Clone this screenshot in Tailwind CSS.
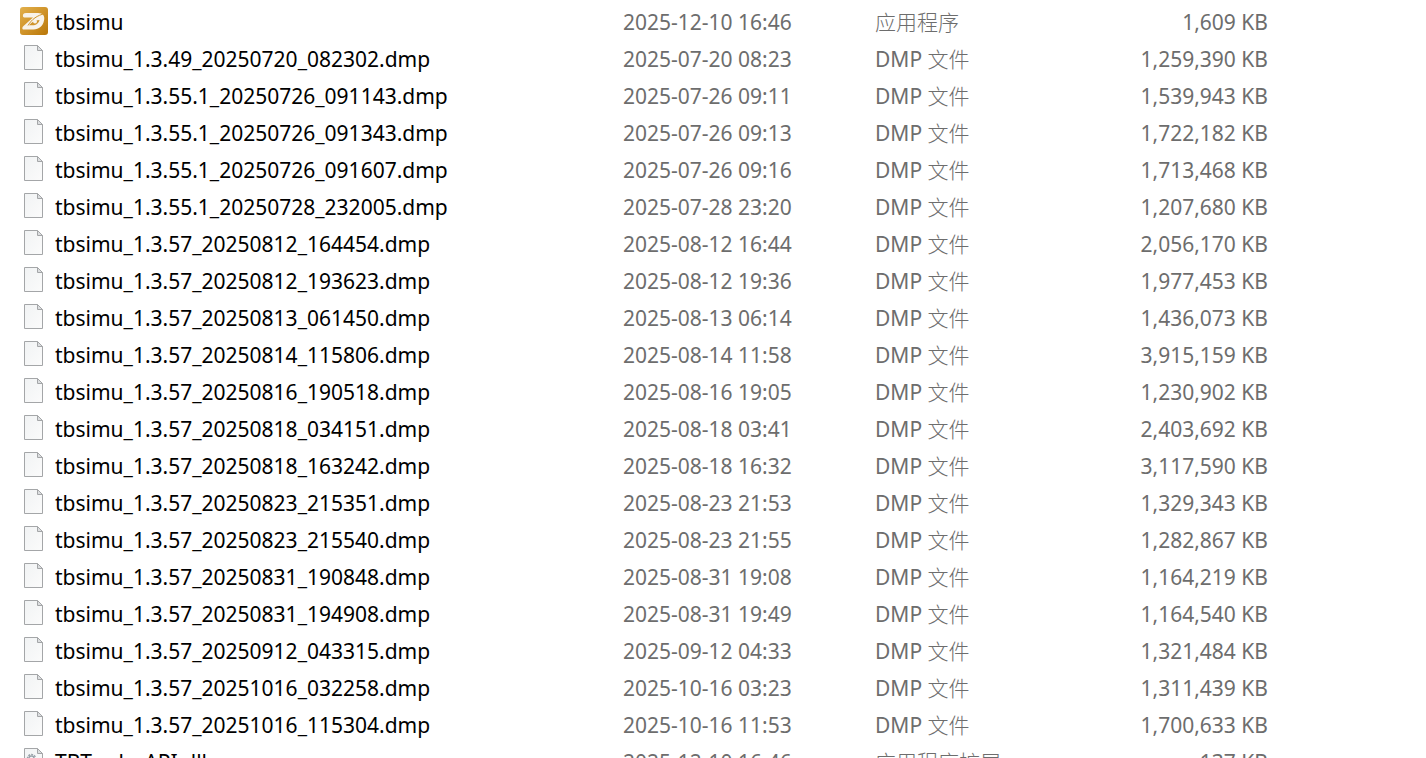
<!DOCTYPE html>
<html lang="zh-CN">
<head>
  <meta charset="UTF-8" />
  <meta name="viewport" content="width=device-width, initial-scale=1.0"/>
  <title>tbsimu</title>
  <script src="https://cdn.jsdelivr.net/npm/@tailwindcss/browser@4"></script>
</head>
<body class="h-screen overflow-hidden bg-white font-['Noto_Sans','Noto_Sans_CJK_SC',sans-serif] text-[21px] leading-[37px] text-[#6d6d6d]">

  <!-- Icons -->
  <svg class="absolute size-0">
    <defs>
      <linearGradient id="gold" x1="0" y1="0" x2="1" y2="1">
        <stop offset="0" stop-color="#e2b04c"/>
        <stop offset="0.5" stop-color="#d0942a"/>
        <stop offset="1" stop-color="#b87608"/>
      </linearGradient>
      <linearGradient id="paper" x1="0" y1="0" x2="1" y2="1">
        <stop offset="0" stop-color="#f1f3f4"/>
        <stop offset="1" stop-color="#fbfbfb"/>
      </linearGradient>
    </defs>
    <symbol id="app" viewBox="0 0 28 28">
      <rect width="28" height="28" rx="3" fill="url(#gold)"/>
      <path d="M3 9.500C2.500 7.500 3.500 6 6 6h12c5 0 7 3 6 7.500C23 19 19 22.500 13.500 22.500H3.500c-1.500 0-1.500-2.500 0-3.500L13 10.500H5c-1 0-1.800-.2-2-1z" fill="#f8f3ea"/>
      <path d="M8 18.500C12 12 17 8.500 25 6.500" fill="none" stroke="#d0942a"/>
      <path d="M9 18.300c2.500-3.300 5.500-4.800 10.500-5.300-.5 3-3.500 5.300-7 5.300z" fill="#d0942a"/>
      <circle cx="15" cy="14.500" r="2" fill="#f8f3ea"/>
    </symbol>
    <symbol id="doc" viewBox="0 0 19 25">
      <path d="M.5.5h13l5 5v19H.5z" fill="url(#paper)" stroke="#a4a6a8"/>
      <path d="M13.500.5v5h5z" fill="#dcdee0" stroke="#a4a6a8"/>
    </symbol>
    <symbol id="dll" viewBox="0 0 19 25">
      <path d="M.5.5h13l5 5v19H.5z" fill="url(#paper)" stroke="#a4a6a8"/>
      <path d="M13.500.5v5h5z" fill="#dcdee0" stroke="#a4a6a8"/>
      <circle cx="7.500" cy="10.500" r="2.500" fill="none" stroke="#9aa3ab" stroke-width="1.500"/>
      <circle cx="7.500" cy="10.500" r="4" fill="none" stroke="#9aa3ab" stroke-width="1.500" stroke-dasharray="2 1"/>
    </symbol>
  </svg>

  <main class="pt-1 pl-5 pr-[158px]">
    <table class="w-full table-fixed whitespace-nowrap">
      <colgroup>
        <col>
        <col class="w-[252px]">
        <col class="w-[252px]">
        <col class="w-[141px]">
      </colgroup>
      <tbody id="files"></tbody>
    </table>
  </main>

  <script>
    const dmp = `DMP <span class="font-light">文件</span>`;

    const files = [
      ["tbsimu", "2025-12-10 16:46", `<span class="font-light">应用程序</span>`, "1,609", "app"],
      ["tbsimu_1.3.49_20250720_082302.dmp", "2025-07-20 08:23", dmp, "1,259,390"],
      ["tbsimu_1.3.55.1_20250726_091143.dmp", "2025-07-26 09:11", dmp, "1,539,943"],
      ["tbsimu_1.3.55.1_20250726_091343.dmp", "2025-07-26 09:13", dmp, "1,722,182"],
      ["tbsimu_1.3.55.1_20250726_091607.dmp", "2025-07-26 09:16", dmp, "1,713,468"],
      ["tbsimu_1.3.55.1_20250728_232005.dmp", "2025-07-28 23:20", dmp, "1,207,680"],
      ["tbsimu_1.3.57_20250812_164454.dmp", "2025-08-12 16:44", dmp, "2,056,170"],
      ["tbsimu_1.3.57_20250812_193623.dmp", "2025-08-12 19:36", dmp, "1,977,453"],
      ["tbsimu_1.3.57_20250813_061450.dmp", "2025-08-13 06:14", dmp, "1,436,073"],
      ["tbsimu_1.3.57_20250814_115806.dmp", "2025-08-14 11:58", dmp, "3,915,159"],
      ["tbsimu_1.3.57_20250816_190518.dmp", "2025-08-16 19:05", dmp, "1,230,902"],
      ["tbsimu_1.3.57_20250818_034151.dmp", "2025-08-18 03:41", dmp, "2,403,692"],
      ["tbsimu_1.3.57_20250818_163242.dmp", "2025-08-18 16:32", dmp, "3,117,590"],
      ["tbsimu_1.3.57_20250823_215351.dmp", "2025-08-23 21:53", dmp, "1,329,343"],
      ["tbsimu_1.3.57_20250823_215540.dmp", "2025-08-23 21:55", dmp, "1,282,867"],
      ["tbsimu_1.3.57_20250831_190848.dmp", "2025-08-31 19:08", dmp, "1,164,219"],
      ["tbsimu_1.3.57_20250831_194908.dmp", "2025-08-31 19:49", dmp, "1,164,540"],
      ["tbsimu_1.3.57_20250912_043315.dmp", "2025-09-12 04:33", dmp, "1,321,484"],
      ["tbsimu_1.3.57_20251016_032258.dmp", "2025-10-16 03:23", dmp, "1,311,439"],
      ["tbsimu_1.3.57_20251016_115304.dmp", "2025-10-16 11:53", dmp, "1,700,633"],
      ["TBTraderAPI.dll", "2025-12-10 16:46", `<span class="font-light">应用程序扩展</span>`, "137", "dll"],
    ];

    const icons = {
      app: `<svg class="w-7 h-7 mb-[3px]"><use href="#app"/></svg>`,
      doc: `<svg class="w-[19px] h-[25px] ml-1 mr-[5px] mb-1"><use href="#doc"/></svg>`,
      dll: `<svg class="w-[19px] h-[25px] ml-1 mr-[5px] mb-1"><use href="#dll"/></svg>`,
    };

    document.getElementById("files").innerHTML = files.map(([name, date, type, size, icon = "doc"]) => `
      <tr class="h-[37px]">
        <td class="p-0 text-black"><div class="flex items-center gap-[7px]">${icons[icon]}<span>${name}</span></div></td>
        <td class="p-0">${date}</td>
        <td class="p-0">${type}</td>
        <td class="p-0 text-right">${size} KB</td>
      </tr>`).join("");
  </script>

</body>
</html>
